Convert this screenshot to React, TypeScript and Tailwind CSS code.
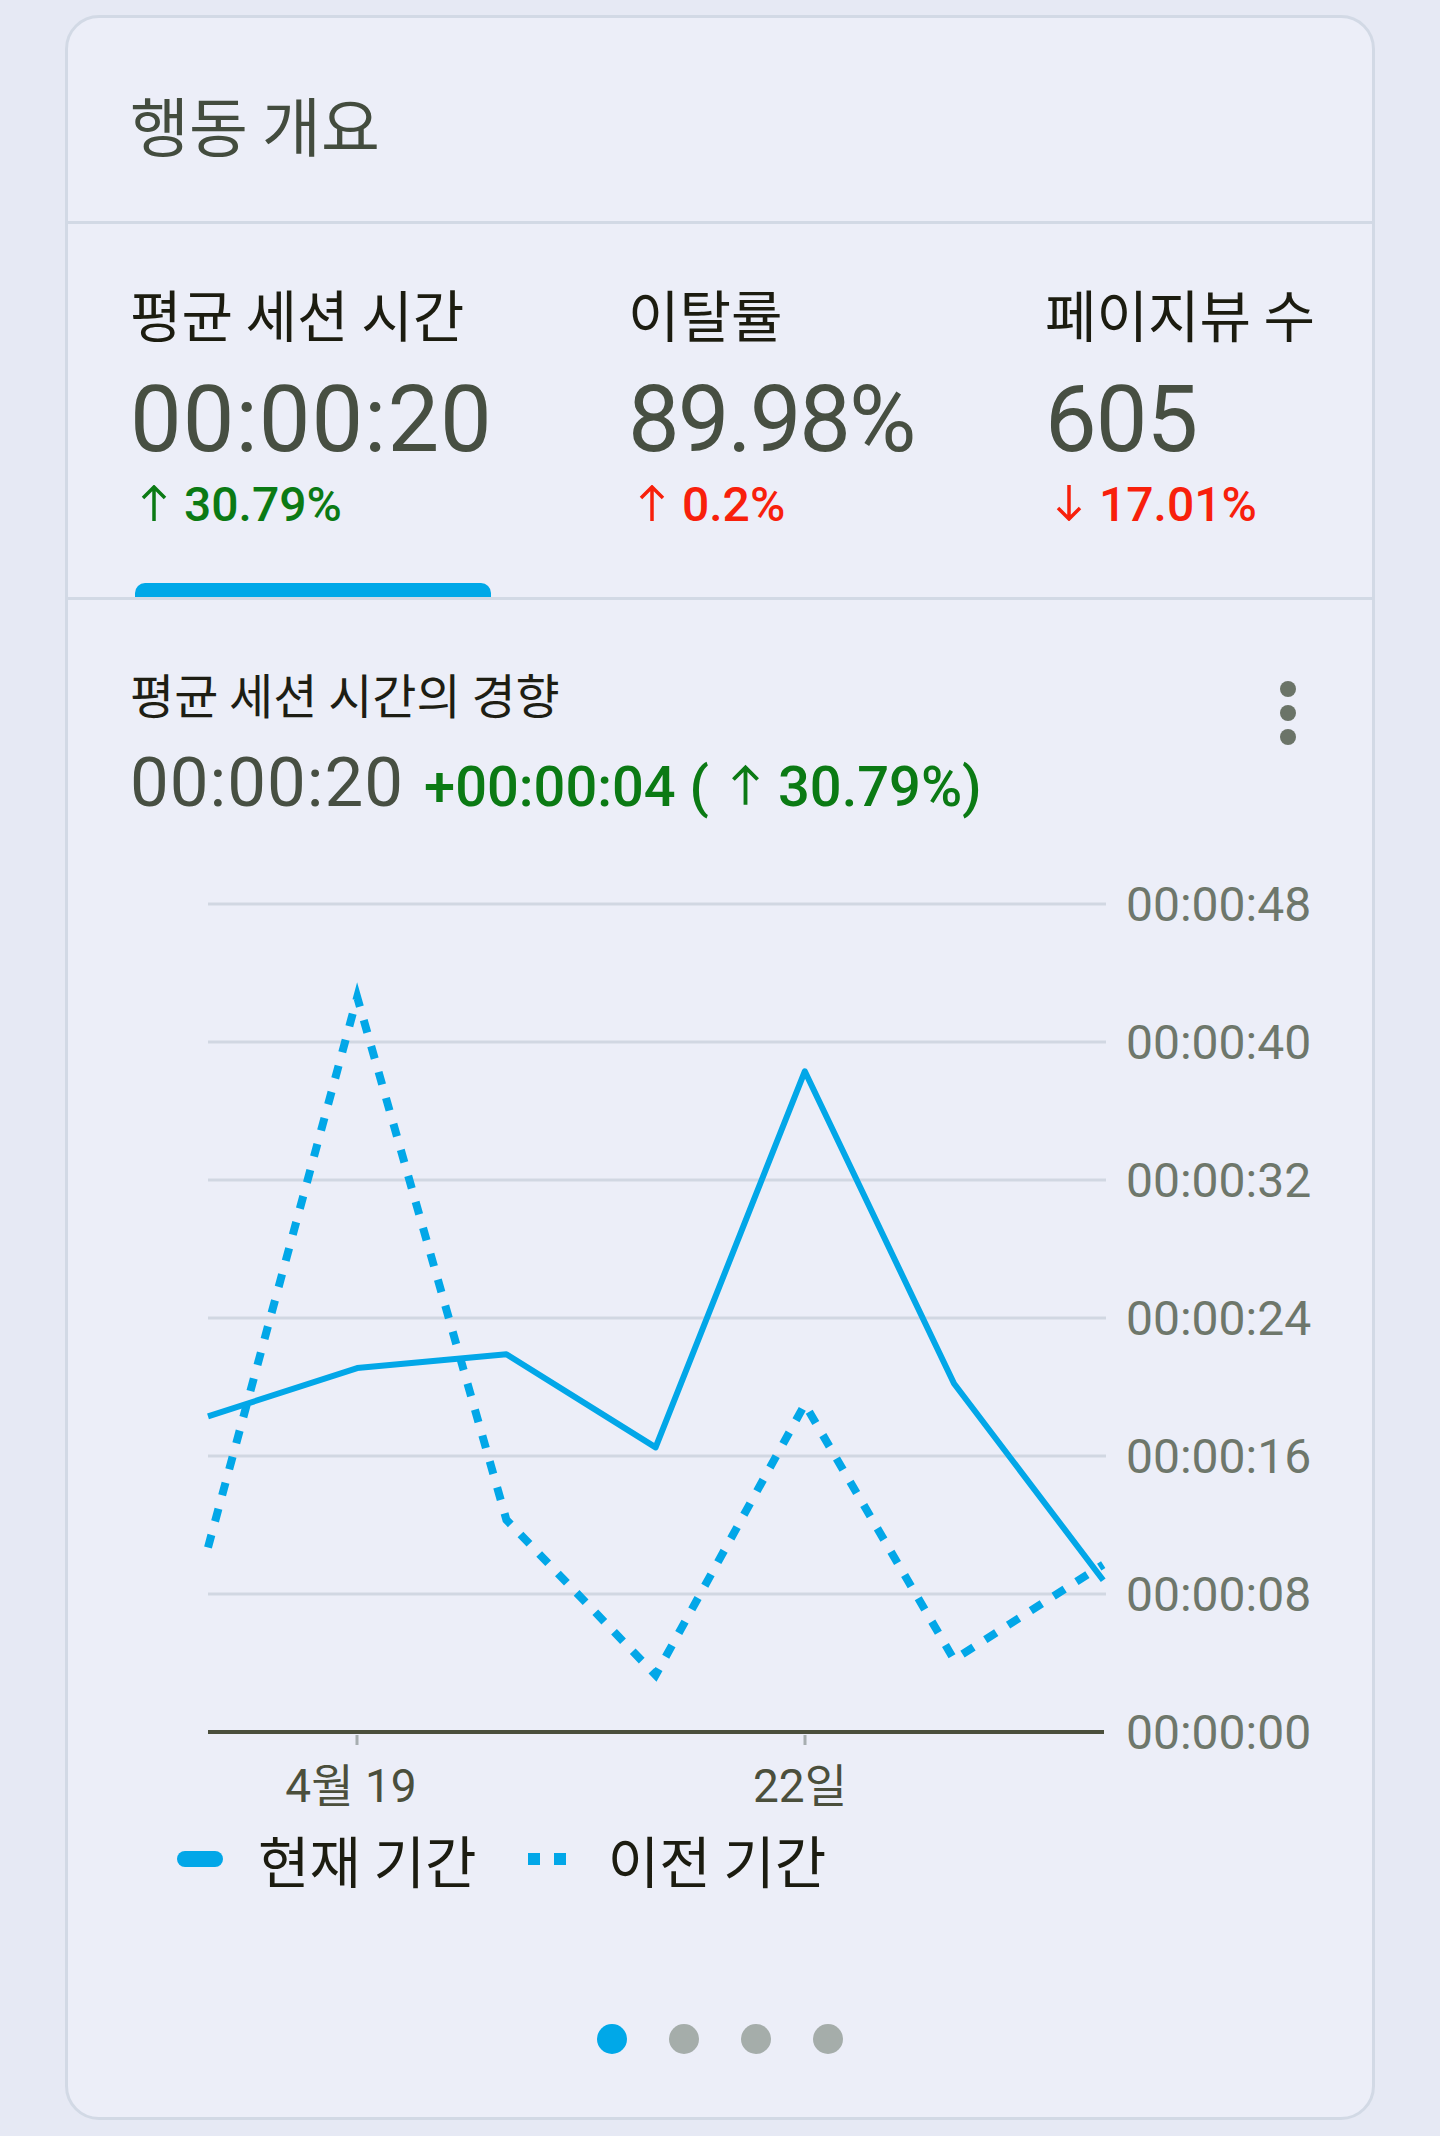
const KR = "font-['Noto_Sans_CJK_KR',sans-serif]";
const NUM = "font-['Roboto','Noto_Sans_CJK_KR',sans-serif]";

const tabs = [
  { label: '평균 세션 시간', value: '00:00:20', change: '30.79%', up: true, good: true, width: 'w-[498px] shrink-0', track: 'tracking-[1px]' },
  { label: '이탈률', value: '89.98%', change: '0.2%', up: true, good: false, width: 'w-[417px] shrink-0', track: 'tracking-[-2px]' },
  { label: '페이지뷰 수', value: '605', change: '17.01%', up: false, good: false, width: 'min-w-0 flex-1', track: 'tracking-[-1px]' },
];

// seconds per day, current vs previous period
const current = [18.3, 21.1, 21.9, 16.5, 38.3, 20.2, 8.8];
const previous = [10.7, 42.6, 12.3, 3.3, 19.0, 4.2, 9.7];

const X0 = 140;
const DX = 149.2;
const BASE = 872;
const STEP = 138 / 8;
const ticks = ['00:00:00', '00:00:08', '00:00:16', '00:00:24', '00:00:32', '00:00:40', '00:00:48'];

const toPoints = (d: number[]) => d.map((s, i) => `${X0 + i * DX},${BASE - s * STEP}`).join(' ');

function Arrow({ up, className }: { up: boolean; className: string }) {
  return (
    <svg viewBox="0 0 30 36" className={className} fill="none" stroke="currentColor" strokeWidth={3.5}>
      {up ? <path d="M15 2v34M4 13L15 2l11 11" /> : <path d="M15 0v34M4 23l11 11 11-11" />}
    </svg>
  );
}

function TrendChart() {
  return (
    <svg width={1304} height={965} className="block">
      {ticks.map((t, k) => {
        const y = BASE - k * 138;
        return (
          <g key={t}>
            {k > 0 && <line x1={140} x2={1038} y1={y} y2={y} stroke="#d1d7e2" strokeWidth={3} />}
            <text x={1058} y={y + 17} fontFamily="Roboto, sans-serif" fontSize={48} fill="#6e776b">
              {t}
            </text>
          </g>
        );
      })}
      <line x1={140} x2={1036} y1={BASE} y2={BASE} stroke="#4b4f3c" strokeWidth={4} />
      <line x1={289} x2={289} y1={875} y2={885} stroke="#a7aeb0" strokeWidth={3} />
      <line x1={737} x2={737} y1={875} y2={885} stroke="#a7aeb0" strokeWidth={3} />
      <text x={283} y={942} textAnchor="middle" fontFamily="Roboto, 'Noto Sans CJK KR', sans-serif" fontSize={46} fill="#4b4f3c">
        4월 19
      </text>
      <text x={732} y={942} textAnchor="middle" fontFamily="Roboto, 'Noto Sans CJK KR', sans-serif" fontSize={46} fill="#4b4f3c">
        22일
      </text>
      <polyline points={toPoints(previous)} fill="none" stroke="#02a7e8" strokeWidth={8} strokeDasharray="13 14" />
      <polyline points={toPoints(current)} fill="none" stroke="#02a7e8" strokeWidth={6} strokeLinejoin="round" />
    </svg>
  );
}

export default function App() {
  return (
    <div className="min-h-[2136px] bg-[#e6e9f4] pt-[15px] pl-[65px]">
      <div className="w-[1310px] overflow-hidden rounded-[34px] border-[3px] border-[#d2d9e5] bg-[#eceef8]">
        {/* header */}
        <div className="h-[206px] border-b-[3px] border-[#d2d9e5] pt-[73px] pl-[62px]">
          <h1 className={`${KR} text-[64px] leading-[64px] font-normal text-[#434c3e]`}>행동 개요</h1>
        </div>

        {/* metric tabs */}
        <div className="flex border-b-[3px] border-[#d2d9e5] pl-[62px] pt-[61px]">
          {tabs.map((t, i) => (
            <div key={t.label} className={`${t.width} flex flex-col`}>
              <div className={`${KR} whitespace-nowrap text-[56px] leading-[56px] text-[#1c1c10]`}>{t.label}</div>
              <div className={`${NUM} ${t.track} mt-[33px] text-[92px] leading-[92px] text-[#474f42]`}>{t.value}</div>
              <div
                className={`${NUM} mt-[15px] flex items-baseline gap-[15px] pl-[9px] text-[48px] leading-[48px] font-medium ${
                  t.good ? 'text-[#0b7a14]' : 'text-[#f8200b]'
                }`}
              >
                <Arrow up={t.up} className="h-[36px] w-[30px]" />
                <span>{t.change}</span>
              </div>
              <div className="mt-[54px] h-[14px]">
                {i === 0 && <div className="ml-[5px] h-[14px] w-[356px] rounded-t-[10px] bg-[#00a8e8]" />}
              </div>
            </div>
          ))}
        </div>

        {/* trend */}
        <div className="pt-[69px]">
          <div className="flex items-start justify-between pl-[62px] pr-[76px]">
            <div>
              <div className={`${KR} text-[48px] leading-[48px] text-[#1e1e14]`}>평균 세션 시간의 경향</div>
              <div className={`${NUM} mt-[34px] flex h-[64px] items-baseline whitespace-nowrap`}>
                <span className="text-[69px] leading-[64px] tracking-[1px] text-[#474f42]">00:00:20</span>
                <span className="ml-[20px] text-[56px] leading-[64px] font-medium text-[#0b7a14]">+00:00:04 (</span>
                <Arrow up className="ml-[20px] mr-[16px] h-[42px] w-[33px] text-[#0b7a14]" />
                <span className="text-[56px] leading-[64px] font-medium text-[#0b7a14]">30.79%)</span>
              </div>
            </div>
            <div className="mt-[12px] flex flex-col gap-[8px]">
              <span className="h-[16px] w-[16px] rounded-full bg-[#6b7468]" />
              <span className="h-[16px] w-[16px] rounded-full bg-[#6b7468]" />
              <span className="h-[16px] w-[16px] rounded-full bg-[#6b7468]" />
            </div>
          </div>

          <div className="mt-[45px]">
            <TrendChart />
          </div>

          {/* legend */}
          <div className={`${KR} flex h-[68px] items-center pl-[109px] text-[56px] leading-[56px] text-[#1c1c10]`}>
            <span className="h-[16px] w-[46px] rounded-full bg-[#02a7e8]" />
            <span className="ml-[35px]">현재 기간</span>
            <span className="ml-[51px] h-[12px] w-[12px] bg-[#02a7e8]" />
            <span className="ml-[14px] h-[12px] w-[12px] bg-[#02a7e8]" />
            <span className="ml-[42px]">이전 기간</span>
          </div>

          {/* pager */}
          <div className="mt-[131px] flex justify-center gap-[42px] pb-[63px]">
            <span className="h-[30px] w-[30px] rounded-full bg-[#00a8e8]" />
            <span className="h-[30px] w-[30px] rounded-full bg-[#a5adaa]" />
            <span className="h-[30px] w-[30px] rounded-full bg-[#a5adaa]" />
            <span className="h-[30px] w-[30px] rounded-full bg-[#a5adaa]" />
          </div>
        </div>
      </div>
    </div>
  );
}
